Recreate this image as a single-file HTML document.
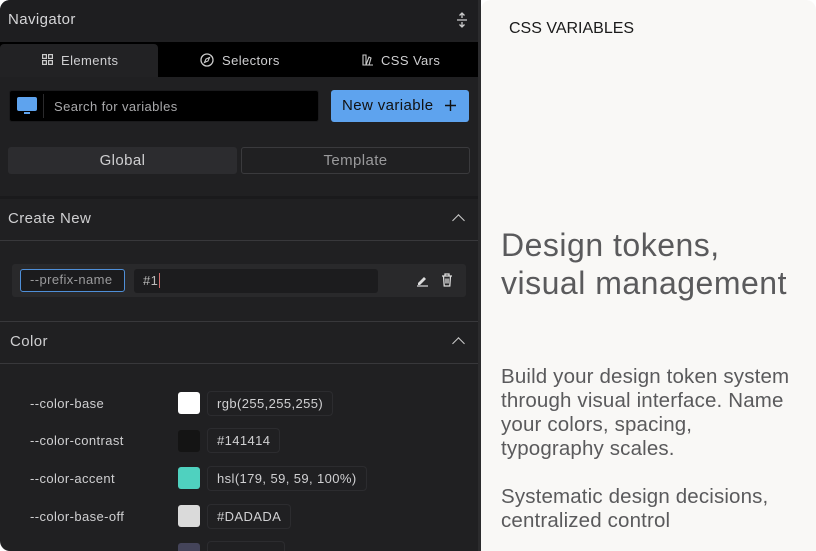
<!DOCTYPE html>
<html><head><meta charset="utf-8"><style>
*{margin:0;padding:0;box-sizing:border-box}
body{width:816px;height:551px;background:#fff;position:relative;overflow:hidden;font-family:"Liberation Sans",sans-serif}
.a{position:absolute}
#panel{left:0;top:0;width:481px;height:551px;background:#202022;border-radius:10px 0 0 10px;overflow:hidden;letter-spacing:0.4px}
#card{left:481px;top:0;width:335px;height:551px;background:#f9f8f6;border-radius:10px 10px 0 0}
.t{color:#cfcfd1;font-size:13px}
.line{height:1px;background:#38383b;left:0;width:478px}
.chev{width:9px;height:9px;border-left:1.6px solid #ccc;border-top:1.6px solid #ccc;transform:rotate(45deg)}
.sw{width:22px;height:22px;border-radius:3px;left:178px}
.val{left:207px;height:25px;border:1px solid #2c2c2f;border-radius:4px;color:#d0d0d2;font-size:13px;line-height:23px;padding:0 9px}
.nm{left:30px;color:#cfcfd1;font-size:13px}
.body{left:20px;width:289px;color:#5a5a5c;font-size:20.5px;line-height:24px;letter-spacing:0.15px}
</style></head><body>
<div id="panel" class="a">
  <div class="a" style="left:0;top:0;width:478px;height:40px;background:#1e1e20"></div>
  <div class="a" style="left:8px;top:11px;color:#d6d6d8;font-size:15px">Navigator</div>
  <svg class="a" style="left:456px;top:12px" width="12" height="16" viewBox="0 0 12 16"><path d="M6 1v5M3.5 3.5L6 1l2.5 2.5M1 8h10M6 15v-5M3.5 12.5L6 15l2.5-2.5" stroke="#ccc" stroke-width="1.3" fill="none"/></svg>
  <div class="a" style="left:0;top:42px;width:478px;height:35px;background:#000"></div>
  <div class="a" style="left:0;top:44px;width:158px;height:33px;background:#222224;border-radius:4px 4px 0 0"></div>
  <svg class="a" style="left:42px;top:54px" width="11" height="11" viewBox="0 0 11 11"><g fill="none" stroke="#ccc" stroke-width="1.2"><rect x="0.6" y="0.6" width="3.8" height="3.8"/><rect x="6.6" y="0.6" width="3.8" height="3.8"/><rect x="0.6" y="6.6" width="3.8" height="3.8"/><rect x="6.6" y="6.6" width="3.8" height="3.8"/></g></svg>
  <div class="a t" style="left:61px;top:53px">Elements</div>
  <svg class="a" style="left:200px;top:53px" width="14" height="14" viewBox="0 0 14 14"><circle cx="7" cy="7" r="6" stroke="#ccc" stroke-width="1.3" fill="none"/><path d="M9.5 4.5L8 8 4.5 9.5 6 6z" stroke="#ccc" stroke-width="1.1" fill="none"/></svg>
  <div class="a t" style="left:222px;top:53px">Selectors</div>
  <svg class="a" style="left:362px;top:53px" width="12" height="13" viewBox="0 0 12 13"><path d="M1 12V2h3v10zM4 12l3-8 2 1-2 7zM1 12h10" stroke="#ccc" stroke-width="1.1" fill="none"/></svg>
  <div class="a t" style="left:381px;top:53px">CSS Vars</div>
  <div class="a" style="left:9px;top:90px;width:310px;height:32px;background:#000;border-radius:3px;border:1px solid #1a1a1c"></div>
  <div class="a" style="left:17px;top:97px;width:20px;height:14px;background:#5ea3ee;border-radius:2px"></div>
  <div class="a" style="left:24px;top:112px;width:6px;height:2px;background:#5ea3ee"></div>
  <div class="a" style="left:43px;top:94px;width:1px;height:24px;background:#2a2a2c"></div>
  <div class="a" style="left:54px;top:99px;color:#a9a9ab;font-size:13px">Search for variables</div>
  <div class="a" style="left:331px;top:90px;width:138px;height:32px;background:#5ea3ee;border-radius:3px"></div>
  <div class="a" style="left:342px;top:97px;color:#111;font-size:15px">New variable</div>
  <svg class="a" style="left:444px;top:99px" width="13" height="13" viewBox="0 0 13 13"><path d="M6.5 1v11M1 6.5h11" stroke="#111" stroke-width="1.4"/></svg>
  <div class="a" style="left:8px;top:147px;width:229px;height:27px;background:#2c2c2f;border-radius:3px;color:#cfcfd1;font-size:15px;text-align:center;line-height:27px">Global</div>
  <div class="a" style="left:241px;top:147px;width:229px;height:27px;border:1px solid #3a3a3d;border-radius:3px;color:#9a9a9c;font-size:15px;text-align:center;line-height:25px">Template</div>
  <div class="a" style="left:0;top:196px;width:478px;height:3px;background:#1a1a1c"></div>
  <div class="a" style="left:8px;top:210px;color:#cfcfd1;font-size:15px">Create New</div>
  <div class="a chev" style="left:454px;top:216px"></div>
  <div class="a line" style="top:240px"></div>
  <div class="a" style="left:12px;top:264px;width:454px;height:33px;background:#29292b;border-radius:3px"></div>
  <div class="a" style="left:20px;top:269px;width:105px;height:23px;border:1.5px solid #4f8fd8;border-radius:3px;background:#1b1b1d;color:#9a9a9c;font-size:13px;line-height:20px;padding-left:9px">--prefix-name</div>
  <div class="a" style="left:134px;top:269px;width:244px;height:24px;background:#1c1c1e;border-radius:3px;color:#bbb;font-size:13px;line-height:24px;padding-left:9px">#1<span style="border-left:1px solid #d07070;margin-left:1px"></span></div>
  <svg class="a" style="left:416px;top:274px" width="13" height="13" viewBox="0 0 13 13"><path d="M2 9l6-6 2 2-6 6H2z" fill="#ddd"/><path d="M1 12h11" stroke="#ddd" stroke-width="1.2"/></svg>
  <svg class="a" style="left:441px;top:273px" width="12" height="14" viewBox="0 0 12 14"><path d="M1 3h10M4 3V1h4v2M2.5 3l.7 10h5.6l.7-10M5 5.5v5M7 5.5v5" stroke="#ddd" stroke-width="1.3" fill="none"/></svg>
  <div class="a line" style="top:321px"></div>
  <div class="a" style="left:10px;top:333px;color:#cfcfd1;font-size:15px">Color</div>
  <div class="a chev" style="left:454px;top:339px"></div>
  <div class="a line" style="top:363px"></div>
  <div class="a nm" style="top:396px">--color-base</div>
  <div class="a sw" style="top:392px;background:#fff"></div>
  <div class="a val" style="top:391px">rgb(255,255,255)</div>
  <div class="a nm" style="top:433px">--color-contrast</div>
  <div class="a sw" style="top:430px;background:#141414"></div>
  <div class="a val" style="top:428px">#141414</div>
  <div class="a nm" style="top:471px">--color-accent</div>
  <div class="a sw" style="top:467px;background:#4fd1bf"></div>
  <div class="a val" style="top:466px">hsl(179, 59, 59, 100%)</div>
  <div class="a nm" style="top:509px">--color-base-off</div>
  <div class="a sw" style="top:505px;background:#dadada"></div>
  <div class="a val" style="top:504px">#DADADA</div>
  <div class="a sw" style="top:543px;background:#44445a"></div>
  <div class="a val" style="top:541px;width:78px"></div>
  <div class="a" style="left:478px;top:0;width:3px;height:551px;background:#2b2b2d"></div>
</div>
<div id="card" class="a">
  <div class="a" style="left:28px;top:20px;color:#1a1a1a;font-size:16px">CSS VARIABLES</div>
  <div class="a" style="left:20px;top:226px;color:#5a5a5c;font-size:32px;line-height:38px;letter-spacing:0.5px;white-space:nowrap">Design tokens,<br>visual management</div>
  <div class="a body" style="top:365px">Build your design token system through visual interface. Name your colors, spacing, typography scales.</div>
  <div class="a body" style="top:485px">Systematic design decisions, centralized control</div>
</div>
</body></html>
